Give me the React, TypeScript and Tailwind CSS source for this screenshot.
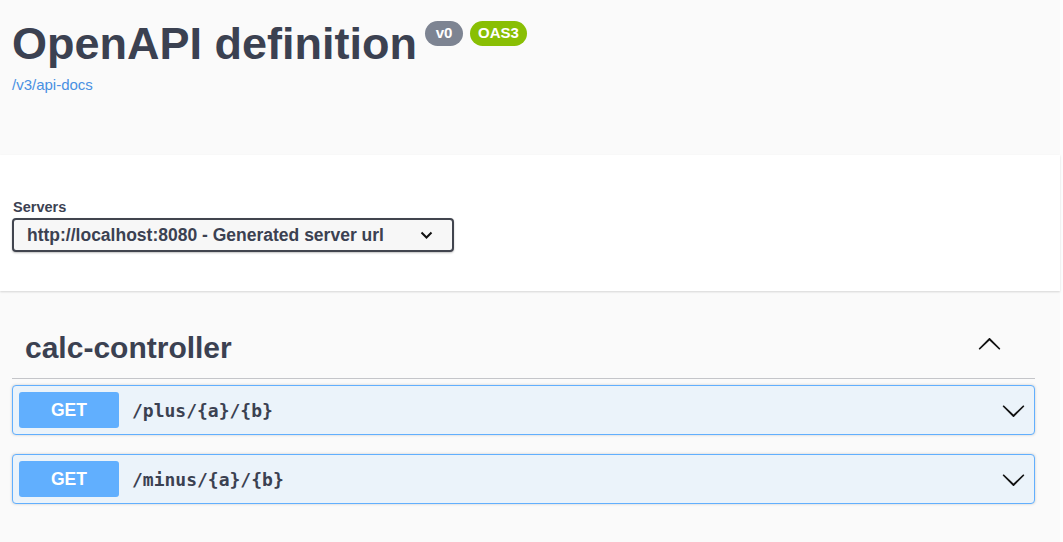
import React from "react"

const sans = "font-['Liberation_Sans',Arial,sans-serif]"
const mono = "font-['DejaVu_Sans_Mono',monospace]"

function Arrow({ up = false }: { up?: boolean }) {
  return (
    <svg
      width="25"
      height="25"
      viewBox="0 0 20 20"
      className={up ? "rotate-180" : ""}
      aria-hidden="true"
    >
      <path
        fill="#111"
        d="M17.418 6.109c.272-.268.709-.268.979 0s.271.701 0 .969l-7.908 7.83c-.27.268-.707.268-.979 0l-7.908-7.83c-.27-.268-.27-.701 0-.969.271-.268.709-.268.98 0L10 13.25l7.418-7.141z"
      />
    </svg>
  )
}

function Operation({ path, className = "" }: { path: string; className?: string }) {
  return (
    <div
      className={`flex h-[50px] items-center rounded-[4px] border border-[#61affe] bg-[#ebf3fa] pl-[6px] pr-[8px] shadow-[0_0_3px_rgba(0,0,0,0.19)] ${className}`}
    >
      <div className="flex h-[36px] w-[100px] items-center justify-center rounded-[3px] bg-[#61affe] text-[17.5px] font-bold text-white">
        GET
      </div>
      <span className={`${mono} ml-[13px] flex-1 text-[18px] font-bold text-[#3b4151]`}>
        {path}
      </span>
      <Arrow />
    </div>
  )
}

export default function App() {
  return (
    <div className={`${sans} flex min-h-screen bg-[#fdfdfd]`}>
      <div className="min-h-screen w-[1060px] bg-[#fafafa]">
        {/* Info */}
        <header className="h-[155px] pl-[12px] pr-[25px] pt-[21px]">
          <div className="flex items-start">
            <h2 className="text-[45px] font-bold leading-none text-[#3b4151]">
              OpenAPI definition
            </h2>
            <span className="ml-[8px] flex h-[25px] w-[38px] items-center justify-center rounded-full bg-[#7d8492] text-[15px] font-bold text-white">
              v0
            </span>
            <span className="ml-[7px] flex h-[25px] w-[57px] items-center justify-center rounded-full bg-[#89bf04] text-[15px] font-bold text-white">
              OAS3
            </span>
          </div>
          <a href="#" className="mt-[10px] block text-[15px] leading-[18px] text-[#4990e2]">
            /v3/api-docs
          </a>
        </header>

        {/* Servers */}
        <section className="h-[136px] bg-white pl-[12px] pr-[25px] pt-[44px] shadow-[0_1px_2px_0_rgba(0,0,0,0.15)]">
          <div className="pl-[1px] text-[14.5px] font-bold leading-[16px] text-[#3b4151]">Servers</div>
          <div className="mt-[3px] flex h-[34px] w-[442px] items-center justify-between rounded-[4px] border-2 border-[#41444e] bg-[#f7f7f7] pl-[13px] pr-[19px] shadow-[0_1px_2px_0_rgba(0,0,0,0.25)]">
            <span className="text-[17.5px] font-bold text-[#3b4151]">
              http://localhost:8080 - Generated server url
            </span>
            <svg width="13" height="8" viewBox="0 0 13 8" aria-hidden="true">
              <path d="M1.5 1.5l5 5 5-5" fill="none" stroke="#111" strokeWidth="2" />
            </svg>
          </div>
        </section>

        {/* Tag */}
        <main className="pl-[12px] pr-[25px] pt-[27px]">
          <div className="flex h-[61px] items-center justify-between border-b border-[#c4c5c9] pl-[13px] pr-[33px]">
            <h3 className="text-[30px] font-bold leading-[36px] text-[#3b4151]">calc-controller</h3>
            <div className="-mt-[7px]">
              <Arrow up />
            </div>
          </div>
          <Operation path="/plus/{a}/{b}" className="mt-[6px]" />
          <Operation path="/minus/{a}/{b}" className="mt-[19px]" />
        </main>
      </div>
    </div>
  )
}
